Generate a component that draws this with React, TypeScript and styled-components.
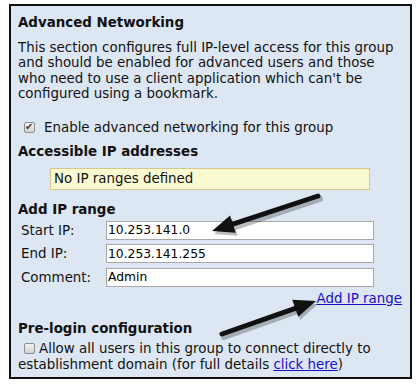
import React from "react";
import styled, { createGlobalStyle } from "styled-components";

const GlobalStyle = createGlobalStyle`
  body {
    margin: 0;
    background: #fff;
    font-family: "DejaVu Sans", Verdana, sans-serif;
  }
`;

const Panel = styled.div`
  position: relative;
  box-sizing: border-box;
  margin: 4px 0 0 9px;
  width: 403px;
  height: 375px;
  border: 2px solid #111;
  background: #dde7f3;
  padding: 9px 0 0 7px;
  color: #111;
  font-size: 13.4px;
  line-height: 16px;
`;

const Heading = styled.div<{ $top?: number }>`
  font-weight: bold;
  margin-top: ${(p) => p.$top ?? 0}px;
`;

const Paragraph = styled.p`
  margin: 8.5px 0 0 0;
  line-height: 15.5px;
  white-space: nowrap;
`;

const CheckRow = styled.div<{ $top: number; $gap: number }>`
  display: flex;
  align-items: center;
  margin-top: ${(p) => p.$top}px;
  padding-left: 6px;
  white-space: nowrap;
  gap: ${(p) => p.$gap}px;
`;

const Box = styled.span<{ $checked?: boolean }>`
  position: relative;
  flex: none;
  box-sizing: border-box;
  width: 11px;
  height: 11px;
  border: 1px solid #8f8f8f;
  border-radius: 2px;
  background: linear-gradient(#f4f4f4, #d2d2d2);
  &::after {
    content: ${(p) => (p.$checked ? '"✔"' : '""')};
    position: absolute;
    left: 0px;
    top: -3px;
    font-size: 10px;
    line-height: 14px;
    color: #3a3a3a;
  }
`;

const Notice = styled.div`
  box-sizing: border-box;
  margin: 8px 0 0 32px;
  width: 320px;
  height: 22px;
  line-height: 20px;
  background: #fafad2;
  border: 1px solid #d8c88e;
  padding-left: 3px;
`;

const FieldGrid = styled.div`
  display: grid;
  grid-template-columns: 85px 268px;
  row-gap: 4.5px;
  margin-top: 3px;
  padding-left: 3px;
  align-items: center;
`;

const Label = styled.span`
  line-height: 19px;
`;

const Input = styled.input`
  box-sizing: border-box;
  width: 268px;
  height: 19px;
  margin: 0;
  border: 1px solid #a9a9a9;
  background: #fff;
  font-family: "DejaVu Sans", Tahoma, sans-serif;
  font-size: 12.3px;
  padding: 0 1px;
  color: #000;
  outline: none;
`;

const LinkRow = styled.div`
  text-align: right;
  margin-top: 4px;
  padding-right: 8px;
`;

const Link = styled.a`
  color: #1a0dcc;
  text-decoration: underline;
`;

const TailLine = styled.div`
  line-height: 15.5px;
  white-space: nowrap;
`;

const Arrows = styled.svg`
  position: absolute;
  left: -11px;
  top: -6px;
  pointer-events: none;
`;

const ArrowPath = ({ x1, y1, x2, y2 }: { x1: number; y1: number; x2: number; y2: number }) => {
  const dx = x2 - x1;
  const dy = y2 - y1;
  const len = Math.hypot(dx, dy);
  const ux = dx / len;
  const uy = dy / len;
  const head = 22;
  const bx = x2 - ux * head;
  const by = y2 - uy * head;
  const px = -uy * 9;
  const py = ux * 9;
  const body = `M${x1} ${y1} L${bx} ${by}`;
  const tip = `M${x2} ${y2} L${bx + px} ${by + py} L${bx - px} ${by - py} Z`;
  return (
    <g>
      <g transform="translate(2 3)" opacity="0.25">
        <path d={body} stroke="#000" strokeWidth="6" strokeLinecap="round" fill="none" />
        <path d={tip} fill="#000" />
      </g>
      <path d={body} stroke="#111" strokeWidth="5" strokeLinecap="round" fill="none" />
      <path d={tip} fill="#111" />
    </g>
  );
};

export default function App() {
  return (
    <>
      <GlobalStyle />
      <Panel>
        <Heading>Advanced Networking</Heading>
        <Paragraph>
          This section configures full IP-level access for this group
          <br />
          and should be enabled for advanced users and those
          <br />
          who need to use a client application which can't be
          <br />
          configured using a bookmark.
        </Paragraph>
        <CheckRow $top={18} $gap={9}>
          <Box $checked />
          Enable advanced networking for this group
        </CheckRow>
        <Heading $top={8}>Accessible IP addresses</Heading>
        <Notice>No IP ranges defined</Notice>
        <Heading $top={12}>Add IP range</Heading>
        <FieldGrid>
          <Label>Start IP:</Label>
          <Input defaultValue="10.253.141.0" />
          <Label>End IP:</Label>
          <Input defaultValue="10.253.141.255" />
          <Label>Comment:</Label>
          <Input defaultValue="Admin" />
        </FieldGrid>
        <LinkRow>
          <Link href="#">Add IP range</Link>
        </LinkRow>
        <Heading $top={14}>Pre-login configuration</Heading>
        <CheckRow $top={4} $gap={4}>
          <Box />
          Allow all users in this group to connect directly to
        </CheckRow>
        <TailLine>
          establishment domain (for full details <Link href="#">click here</Link>)
        </TailLine>
        <Arrows width="420" height="385" viewBox="0 0 420 385">
          <ArrowPath x1={318} y1={196} x2={212} y2={231} />
          <ArrowPath x1={222} y1={334} x2={316} y2={301} />
        </Arrows>
      </Panel>
    </>
  );
}
